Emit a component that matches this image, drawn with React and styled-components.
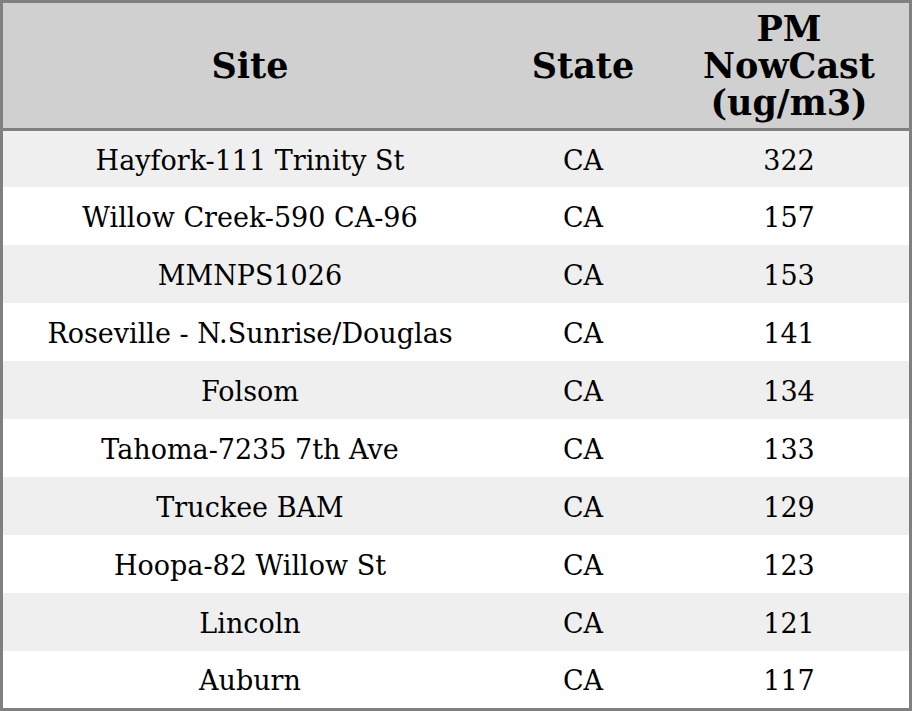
import React from 'react'
import styled, { createGlobalStyle } from 'styled-components'

const Global = createGlobalStyle`
  html, body { margin: 0; padding: 0; background: white; }
`

const Table = styled.table`
  width: 912px;
  border-collapse: collapse;
  border: 3px solid #808080;
  box-sizing: border-box;
  table-layout: fixed;
  font-family: "DejaVu Serif", serif;
  color: black;
`

const Th = styled.th`
  width: ${p => p.w}px;
  background: #d0d0d0;
  font-size: 35px;
  font-weight: bold;
  line-height: 37px;
  height: 125px;
  padding: 0;
  text-align: center;
  vertical-align: middle;
  border-bottom: 3px solid #808080;
`

const Row = styled.tr`
  height: ${p => p.h}px;
  background: ${p => (p.odd ? '#efefef' : 'white')};
`

const Td = styled.td`
  font-size: 27px;
  text-align: center;
  vertical-align: middle;
  padding: 3px 0 0;
  white-space: nowrap;
`

const rows = [
  ['Hayfork-111 Trinity St', 'CA', 322],
  ['Willow Creek-590 CA-96', 'CA', 157],
  ['MMNPS1026', 'CA', 153],
  ['Roseville - N.Sunrise/Douglas', 'CA', 141],
  ['Folsom', 'CA', 134],
  ['Tahoma-7235 7th Ave', 'CA', 133],
  ['Truckee BAM', 'CA', 129],
  ['Hoopa-82 Willow St', 'CA', 123],
  ['Lincoln', 'CA', 121],
  ['Auburn', 'CA', 117],
]

const rowHeight = i => (i === 0 ? 57 : i === rows.length - 1 ? 59 : 58)

export default function App() {
  return (
    <>
      <Global />
      <Table>
        <thead>
          <tr>
            <Th w={494}>Site</Th>
            <Th w={172}>State</Th>
            <Th>PM<br />NowCast<br />(ug/m3)</Th>
          </tr>
        </thead>
        <tbody>
          {rows.map((r, i) => (
            <Row key={r[0]} odd={i % 2 === 0} h={rowHeight(i)}>
              <Td>{r[0]}</Td>
              <Td>{r[1]}</Td>
              <Td>{r[2]}</Td>
            </Row>
          ))}
        </tbody>
      </Table>
    </>
  )
}
